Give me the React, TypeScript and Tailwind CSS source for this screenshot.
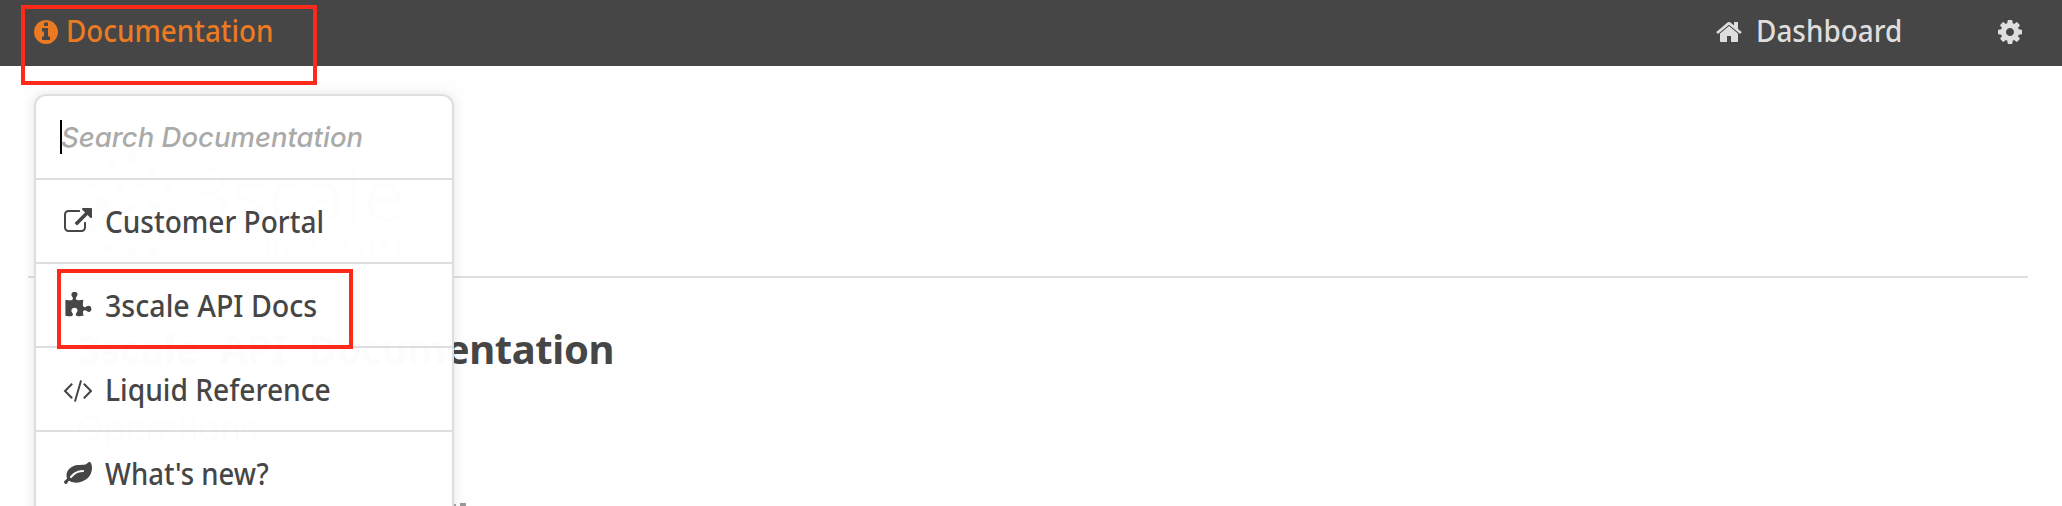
import React from "react";

const icons = {
  info: { box: "0 0 1792 1792", d: "M1152 1376v-160q0-14-9-23t-23-9h-96v-512q0-14-9-23t-23-9h-320q-14 0-23 9t-9 23v160q0 14 9 23t23 9h96v320h-96q-14 0-23 9t-9 23v160q0 14 9 23t23 9h448q14 0 23-9t9-23zm-128-896v-160q0-14-9-23t-23-9h-192q-14 0-23 9t-9 23v160q0 14 9 23t23 9h192q14 0 23-9t9-23zm640 416q0 209-103 385.5t-279.5 279.5-385.5 103-385.5-103-279.5-279.5-103-385.5 103-385.5 279.5-279.5 385.5-103 385.5 103 279.5 279.5 103 385.5z" },
  home: { box: "0 0 1792 1792", d: "M1472 992v480q0 26-19 45t-45 19h-384v-384h-256v384h-384q-26 0-45-19t-19-45v-480q0-1 .5-3t.5-3l575-474 575 474q1 2 1 6zm223-69l-62 74q-8 9-21 11h-3q-13 0-21-7l-692-577-692 577q-12 8-24 7-13-2-21-11l-62-74q-8-10-7-23.5t11-21.5l719-599q32-26 76-26t76 26l244 204v-195q0-14 9-23t23-9h192q14 0 23 9t9 23v408l219 182q10 8 11 21.5t-7 23.5z" },
  cog: { box: "0 0 1792 1792", d: "M1152 896q0-106-75-181t-181-75-181 75-75 181 75 181 181 75 181-75 75-181zm512-109v222q0 12-8 23t-20 13l-185 28q-19 54-39 91 35 50 107 138 10 12 10 25t-9 23q-27 37-99 108t-94 71q-12 0-26-9l-138-108q-44 23-91 38-16 136-29 186-7 28-36 28h-222q-14 0-24.5-8.5t-11.5-21.5l-28-184q-49-16-90-37l-141 107q-10 9-25 9-14 0-25-11-126-114-165-168-7-10-7-23 0-12 8-23 15-21 51-66.5t54-70.5q-27-50-41-99l-183-27q-13-2-21-12.5t-8-23.5v-222q0-12 8-23t19-13l186-28q14-46 39-92-40-57-107-138-10-12-10-24 0-10 9-23 26-36 98.5-107.5t94.5-71.5q13 0 26 10l138 107q44-23 91-38 16-136 29-186 7-28 36-28h222q14 0 24.5 8.5t11.5 21.5l28 184q49 16 90 37l142-107q9-9 24-9 13 0 25 10 129 119 165 170 7 8 7 22 0 12-8 23-15 21-51 66.5t-54 70.5q26 50 41 98l183 28q13 2 21 12.5t8 23.5z" },
  external: { box: "0 0 1792 1792", d: "M1408 928v320q0 119-84.5 203.5t-203.5 84.5h-832q-119 0-203.5-84.5t-84.5-203.5v-832q0-119 84.5-203.5t203.5-84.5h704q14 0 23 9t9 23v64q0 14-9 23t-23 9h-704q-66 0-113 47t-47 113v832q0 66 47 113t113 47h832q66 0 113-47t47-113v-320q0-14 9-23t23-9h64q14 0 23 9t9 23zm384-864v512q0 26-19 45t-45 19-45-19l-176-176-652 652q-10 10-23 10t-23-10l-114-114q-10-10-10-23t10-23l652-652-176-176q-19-19-19-45t19-45 45-19h512q26 0 45 19t19 45z" },
  puzzle: { box: "0 0 1792 1792", d: "M1755 1083q0 81-44.5 135t-123.5 54q-41 0-77.5-17.5t-59-38-56.5-38-71-17.5q-110 0-110 124 0 39 16 115t15 115v5q-22 0-33 1-34 3-97.5 11.5t-115.5 13.5-98 5q-61 0-103-26.5t-42-83.5q0-37 17.5-71t38-56.5 38-59 17.5-77.5q0-79-54-123.5t-135-44.5q-84 0-143 45.5t-59 127.5q0 43 15 83t33.5 64.5 33.5 53 15 50.5q0 45-46 89-37 35-117 35-95 0-245-24-9-2-27.5-4t-27.5-4l-13-2q-1 0-3-1-2 0-2-1v-1024q2 1 17.5 3.5t34 5 21.5 3.5q150 24 245 24 80 0 117-35 46-44 46-89 0-22-15-50.5t-33.5-53-33.5-64.5-15-83q0-82 59-127.5t144-45.5q80 0 134 44.5t54 123.5q0 41-17.5 77.5t-38 59-38 56.5-17.5 71q0 57 42 83.5t103 26.5q64 0 180-15t163-17v2q-1 2-3.5 17.5t-5 34-3.5 21.5q-24 150-24 245 0 80 35 117 44 46 89 46 22 0 50.5-15t53-33.5 64.5-33.5 83-15q82 0 127.5 59t45.5 143z" },
  code: { box: "0 0 2048 1792", d: "M681 1399l-50 50q-10 10-23 10t-23-10l-466-466q-10-10-10-23t10-23l466-466q10-10 23-10t23 10l50 50q10 10 10 23t-10 23l-393 393 393 393q10 10 10 23t-10 23zm591-1067l-373 1291q-4 13-15.5 19.5t-23.5 2.5l-62-17q-13-4-19.5-15.5t-2.5-24.5l373-1291q4-13 15.5-19.5t23.5-2.5l62 17q13 4 19.5 15.5t2.5 24.5zm657 651l-466 466q-10 10-23 10t-23-10l-50-50q-10-10-10-23t10-23l393-393-393-393q-10-10-10-23t10-23l50-50q10-10 23-10t23 10l466 466q10 10 10 23t-10 23z" },
  leaf: { box: "0 0 1792 1792", d: "M1280 704q0-26-19-45t-45-19q-172 0-318 49.5t-259.5 134-235.5 219.5q-19 21-19 45 0 26 19 45t45 19q24 0 45-19 27-24 74-71t67-66q137-124 268.5-176t313.5-52q26 0 45-19t19-45zm512-198q0 95-20 193-46 224-184.5 383t-357.5 268q-214 108-438 108-148 0-286-47-15-5-88-42t-96-37q-16 0-39.5 32t-45 70-52.5 70-60 32q-43 0-63.5-17.5t-45.5-59.5q-2-4-6-11t-5.5-10-3-9.5-1.5-13.5q0-35 31-73.5t68-65.5 68-56 31-48q0-4-14-38t-16-44q-9-51-9-104 0-115 43.5-220t119-184.5 170.5-139 204-95.5q55-18 145-25.5t179.5-9 178.5-6 163.5-24 113.5-56.5l29.5-29.5t29.5-28 27-20 36.5-16 43.5-4.5q39 0 70.5 46t47.5 112 24 124 8 96z" },
};

type IconName = keyof typeof icons;

function Icon({ name, className }: { name: IconName; className: string }) {
  return (
    <svg viewBox={icons[name].box} className={className} fill="currentColor" aria-hidden="true">
      <path d={icons[name].d} />
    </svg>
  );
}

const items: { icon: IconName; label: string; iconClass: string; labelClass: string }[] = [
  { icon: "external", label: "Customer Portal", iconClass: "size-7", labelClass: "scale-x-[0.934]" },
  { icon: "puzzle", label: "3scale API Docs", iconClass: "size-7", labelClass: "scale-x-[0.953]" },
  { icon: "code", label: "Liquid Reference", iconClass: "-ml-[2px] h-7 w-8", labelClass: "scale-x-[0.94]" },
  { icon: "leaf", label: "What's new?", iconClass: "size-7", labelClass: "scale-x-[0.918]" },
];

const logoDots = [
  [62, 8, 5], [40, 18, 4], [82, 20, 4], [20, 34, 5], [50, 38, 4], [72, 36, 5], [98, 38, 4],
  [10, 60, 4], [30, 58, 8], [58, 62, 5], [84, 60, 6], [104, 66, 4], [18, 82, 5], [44, 84, 5],
  [70, 84, 8], [96, 88, 5], [34, 104, 5], [60, 106, 5], [84, 108, 4],
];

export default function App() {
  return (
    <div className="relative h-[506px] w-[2062px] overflow-hidden bg-[#fefefe] font-['Noto_Sans',sans-serif] text-[#464646]">
      <header className="flex h-[66px] items-center justify-between bg-[#464646] pr-[38px] pb-[2px] pl-[32px]">
        <a className="flex items-center text-[#ec7a23]">
          <Icon name="info" className="size-7" />
          <span className="ml-[6px] origin-left scale-x-[0.928] pb-[2px] text-[30px] leading-[60px] font-medium">Documentation</span>
        </a>
        <nav className="flex items-center text-[#dedede]">
          <Icon name="home" className="size-7" />
          <span className="ml-[2px] origin-right scale-x-[0.93] pb-[2px] text-[30px] leading-[60px] font-medium">Dashboard</span>
          <Icon name="cog" className="ml-[94px] size-7" />
        </nav>
      </header>

      <main className="pr-[34px] pl-[28px]">
        <div className="flex h-[210px] pt-[84px] pl-[46px]">
          <svg viewBox="0 0 114 114" className="size-[108px]" fill="#777777" aria-hidden="true">
            {logoDots.map(([x, y, r]) => (
              <circle key={`${x}-${y}`} cx={x} cy={y} r={r} />
            ))}
          </svg>
          <div className="w-[224px] text-right">
            <p className="text-[72px] leading-[86px] font-light tracking-[2px] whitespace-nowrap text-[#777777]">3scale</p>
            <p className="text-[22px] leading-[20px] tracking-[2px] whitespace-nowrap text-[#777777]">BY RED HAT</p>
          </div>
        </div>
        <hr className="border-0 border-t-2 border-[#dedede]" />
        <h1 className="mt-[41px] ml-[50px] text-[40px] leading-[60px] font-bold tracking-[-0.4px] whitespace-nowrap [word-spacing:11px]">
          3scale API Documentation
        </h1>
        <h2 className="mt-[25px] ml-[48px] text-[36px] leading-[48px] font-light">Operations</h2>
        <div className="mt-[51px] ml-[426px] flex items-start gap-[4px]">
          <span className="mt-[1px] h-[4px] w-[2px] bg-[#aaaaaa]" />
          <span className="h-[5px] w-[6px] bg-[#999999]" />
        </div>
      </main>

      <aside className="absolute top-[94px] left-[34px] h-[430px] w-[420px] rounded-t-xl border-2 border-[#dedede] bg-white/[0.985] shadow-[0_0_12px_rgba(0,0,0,0.1)]">
        <div className="flex h-[82px] items-center pl-[24px]">
          <span className="h-[34px] w-[2px] bg-black" />
          <span className="-ml-px pt-[2px] font-['Inter',sans-serif] text-[27.5px] font-medium text-[#aaaaaa] italic">Search Documentation</span>
        </div>
        {items.map((item) => (
          <a key={item.label} className="flex h-[84px] items-center border-t-2 border-[#dedede] pl-[28px]">
            <span className="flex w-[41px] pt-[2px]">
              <Icon name={item.icon} className={item.iconClass} />
            </span>
            <span className={`origin-left text-[30px] font-medium whitespace-nowrap ${item.labelClass}`}>{item.label}</span>
          </a>
        ))}
      </aside>

      <div className="absolute top-[5px] left-[21px] h-[80px] w-[296px] border-4 border-[#fd2a1c]" />
      <div className="absolute top-[269px] left-[57px] h-[80px] w-[296px] border-4 border-[#fd2a1c]" />
    </div>
  );
}
